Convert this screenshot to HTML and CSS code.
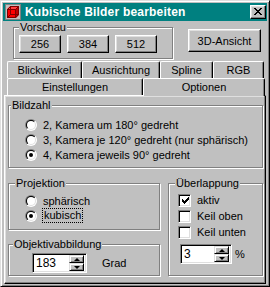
FILE: index.html
```html
<!DOCTYPE html>
<html>
<head>
<meta charset="utf-8">
<title>Kubische Bilder bearbeiten</title>
<link rel="stylesheet" href="styles.css">
</head>
<body>
<div class="window">
  <div class="titlebar">
    <svg class="appicon" width="16" height="16" viewBox="0 0 16 16">
      <rect x="0" y="0" width="16" height="16" fill="#808080"/>
      <rect x="1" y="1" width="14" height="14" fill="#c0c0c0"/>
      <rect x="2" y="5" width="9" height="9" fill="#ff0000"/>
      <polygon points="2,5 5,2 14,2 11,5" fill="#ff4040"/>
      <polygon points="11,5 14,2 14,11 11,14" fill="#c00000"/>
      <g fill="none" stroke="#800000" stroke-width="1">
        <rect x="2.5" y="5.5" width="8" height="8"/>
        <rect x="5.5" y="2.5" width="8" height="8"/>
        <path d="M2.5 5.5 L5.5 2.5 M10.5 5.5 L13.5 2.5 M10.5 13.5 L13.5 10.5 M2.5 13.5 L5.5 10.5"/>
      </g>
    </svg>
    <span class="title">Kubische Bilder bearbeiten</span>
    <span class="close">
      <svg width="8" height="7" viewBox="0 0 8 7">
        <path d="M0 0h2v1h1v1h2v-1h1v-1h2v1h-1v1h-1v1h-1v1h1v1h1v1h1v1h-2v-1h-1v-1h-2v1h-1v1h-2v-1h1v-1h1v-1h1v-1h-1v-1h-1v-1h-1z" fill="#000"/>
      </svg>
    </span>
  </div>

  <div class="top">
    <fieldset class="group vorschau">
      <legend class="lg-vorschau">Vorschau</legend>
      <div class="btnrow">
        <span class="btn small">256</span>
        <span class="btn small">384</span>
        <span class="btn small">512</span>
      </div>
    </fieldset>
    <span class="btn big">3D-Ansicht</span>
  </div>

  <div class="tabs">
    <div class="tabrow">
      <span class="tab t-blick">Blickwinkel</span>
      <span class="tab t-aus">Ausrichtung</span>
      <span class="tab t-spline">Spline</span>
      <span class="tab t-rgb">RGB</span>
    </div>
    <div class="tabrow">
      <span class="tab t-einst">Einstellungen</span>
      <span class="tab t-opt sel">Optionen</span>
    </div>
  </div>

  <div class="panel">
    <fieldset class="group bildzahl">
      <legend class="lg-bild">Bildzahl</legend>
      <div class="opts bild-opts">
        <div class="opt"><span class="radio"><span class="radio-in"><span class="radio-dot"></span></span></span><span>2, Kamera um 180° gedreht</span></div>
        <div class="opt"><span class="radio"><span class="radio-in"><span class="radio-dot"></span></span></span><span>3, Kamera je 120° gedreht (nur sphärisch)</span></div>
        <div class="opt"><span class="radio on"><span class="radio-in"><span class="radio-dot"></span></span></span><span>4, Kamera jeweils 90° gedreht</span></div>
      </div>
    </fieldset>

    <div class="lower">
      <div class="leftcol">
        <fieldset class="group projektion">
          <legend class="lg-proj">Projektion</legend>
          <div class="opts proj-opts">
            <div class="opt"><span class="radio"><span class="radio-in"><span class="radio-dot"></span></span></span><span>sphärisch</span></div>
            <div class="opt"><span class="radio on"><span class="radio-in"><span class="radio-dot"></span></span></span><span class="focus">kubisch</span></div>
          </div>
        </fieldset>
        <fieldset class="group objektiv">
          <legend class="lg-obj">Objektivabbildung</legend>
          <div class="objrow">
            <div class="spin spin-grad">
              <span class="spin-val">183</span>
              <span class="spin-btns">
                <span class="spin-btn"><span class="arrow up"></span></span>
                <span class="spin-btn"><span class="arrow down"></span></span>
              </span>
            </div>
            <span class="unit-grad">Grad</span>
          </div>
        </fieldset>
      </div>

      <fieldset class="group ueber">
        <legend class="lg-ueber">Überlappung</legend>
        <div class="checks">
          <div class="chk"><span class="check"><svg width="7" height="7" viewBox="0 0 7 7"><path d="M0 2h1v1h1v1h1v-1h1v-1h1v-1h1v-1h1v3h-1v1h-1v1h-1v1h-1v1h-1v-1h-1v-1h-1z" fill="#000"/></svg></span><span>aktiv</span></div>
          <div class="chk"><span class="check"></span><span>Keil oben</span></div>
          <div class="chk"><span class="check"></span><span>Keil unten</span></div>
        </div>
        <div class="pctrow">
          <div class="spin spin-pct">
            <span class="spin-val">3</span>
            <span class="spin-btns">
              <span class="spin-btn"><span class="arrow up"></span></span>
              <span class="spin-btn"><span class="arrow down"></span></span>
            </span>
          </div>
          <span class="unit-pct">%</span>
        </div>
      </fieldset>
    </div>
  </div>
</div>
</body>
</html>
```

FILE: styles.css
```css
* { box-sizing: border-box; }
html, body { margin: 0; padding: 0; }
body {
  background: #c0c0c0;
  font-family: "Liberation Sans", Arial, sans-serif;
  font-size: 11px;
  color: #000;
  width: 270px;
  height: 287px;
  overflow: hidden;
}
.window {
  width: 270px;
  height: 287px;
  border: 1px solid;
  border-color: #dfdfdf #000 #000 #dfdfdf;
  box-shadow: inset 1px 1px #fff, inset -1px -1px #808080;
  padding: 2px;
  display: flex;
  flex-direction: column;
  background: #c0c0c0;
}
.titlebar {
  height: 18px;
  flex: none;
  background: #008080;
  display: flex;
  align-items: center;
  padding: 0 1px 0 2px;
  color: #fff;
}
.appicon { flex: none; display: block; }
.title {
  margin-left: 4px;
  font-weight: bold;
  font-size: 12px;
  flex: 1;
  white-space: nowrap;
  letter-spacing: 0.2px;
}
.close {
  width: 16px;
  height: 14px;
  flex: none;
  background: #c0c0c0;
  border: 1px solid;
  border-color: #fff #000 #000 #fff;
  box-shadow: inset -1px -1px #808080, inset 1px 1px #dfdfdf;
  display: flex;
  align-items: center;
  justify-content: center;
  padding-bottom: 1px;
}
.close svg { display: block; }

/* groups */
fieldset.group {
  margin: 0;
  padding: 0;
  min-width: 0;
  border: 1px solid #808080;
  box-shadow: inset 1px 1px #fff, 1px 1px #fff;
}
fieldset.group legend {
  padding: 0 1px;
  line-height: 13px;
  height: 13px;
  background: #c0c0c0;
}

/* top area */
.top {
  height: 40px;
  flex: none;
  display: flex;
  align-items: flex-start;
  padding-left: 10px;
}
.vorschau { width: 160px; }
.lg-vorschau { margin-left: 5px; }
.btnrow {
  display: flex;
  gap: 6px;
  margin: 1px 0 5px 5px;
}
.btn {
  display: flex;
  align-items: center;
  justify-content: center;
  background: #c0c0c0;
  border: 1px solid;
  border-color: #fff #000 #000 #fff;
  box-shadow: inset -1px -1px #808080, inset 1px 1px #dfdfdf;
  color: #000;
  font-size: 11px;
}
.btn.small { width: 42px; height: 18px; }
.btn.big { width: 73px; height: 23px; margin: 8px 0 0 15px; }

/* tabs */
.tabs {
  flex: none;
  padding-left: 4px;
  display: flex;
  flex-direction: column;
}
.tabrow { display: flex; height: 17px; }
.tab {
  height: 17px;
  display: flex;
  align-items: center;
  justify-content: center;
  border-top: 1px solid #fff;
  border-left: 1px solid #fff;
  border-right: 1px solid #000;
  border-radius: 2px 2px 0 0;
  box-shadow: inset -1px 0 #808080;
  background: #c0c0c0;
  padding-bottom: 1px;
}
.t-blick { width: 75px; }
.t-aus { width: 78px; }
.t-spline { width: 53px; }
.t-rgb { width: 51px; }
.t-einst { width: 136px; }
.t-opt { width: 122px; }
.tab.sel {
  height: 18px;
  margin-bottom: -1px;
  position: relative;
  z-index: 1;
  padding-bottom: 2px;
}

/* panel */
.panel {
  flex: 1;
  margin: 0 1px 0 1px;
  border: 1px solid;
  border-color: #fff #000 #000 #fff;
  box-shadow: inset -1px -1px #808080, inset 1px 1px #dfdfdf;
  padding: 3px 0 0 3px;
}
.bildzahl { width: 255px; }
.lg-bild { margin-left: 2px; }
.opts { display: flex; flex-direction: column; }
.bild-opts { margin: 5px 0 5px 16px; }
.opt {
  display: flex;
  align-items: center;
  gap: 6px;
  height: 15px;
  white-space: nowrap;
}
.radio {
  width: 12px;
  height: 12px;
  flex: none;
  border-radius: 50%;
  background: linear-gradient(135deg, #808080 50%, #fff 50%);
  padding: 1px;
}
.radio-in {
  display: block;
  width: 10px;
  height: 10px;
  border-radius: 50%;
  background: linear-gradient(135deg, #000 50%, #dfdfdf 50%);
  padding: 1px;
}
.radio-dot {
  display: flex;
  align-items: center;
  justify-content: center;
  width: 8px;
  height: 8px;
  border-radius: 50%;
  background: #fff;
}
.radio.on .radio-dot::after {
  content: "";
  width: 4px;
  height: 4px;
  border-radius: 50%;
  background: #000;
}
.focus {
  outline: 1px dotted #000;
  outline-offset: 0;
  line-height: 13px;
  padding: 0 1px;
}

.lower {
  display: flex;
  gap: 8px;
  margin-top: 9px;
}
.leftcol { display: flex; flex-direction: column; gap: 8px; width: 152px; }
.projektion { width: 152px; }
.lg-proj { margin-left: 6px; }
.proj-opts { margin: 3px 0 6px 16px; }
.objektiv { width: 152px; }
.lg-obj { margin-left: 4px; }
.objrow {
  display: flex;
  align-items: center;
  margin: 2px 0 2px 23px;
}
.unit-grad { margin-left: 15px; }

.spin {
  display: flex;
  height: 20px;
  border: 1px solid;
  border-color: #808080 #fff #fff #808080;
  box-shadow: inset 1px 1px #000, inset -1px -1px #dfdfdf;
  background: #fff;
  padding: 2px 2px 2px 2px;
}
.spin-grad { width: 55px; }
.spin-pct { width: 52px; }
.spin-val { flex: 1; line-height: 15px; padding-left: 1px; font-size: 12px; }
.spin-btns {
  display: flex;
  flex-direction: column;
  width: 15px;
  margin: -1px 0 -1px 0;
}
.spin-btn {
  flex: 1;
  background: #c0c0c0;
  border: 1px solid;
  border-color: #dfdfdf #000 #000 #dfdfdf;
  box-shadow: inset 1px 1px #fff, inset -1px -1px #808080;
  display: flex;
  align-items: center;
  justify-content: center;
}
.arrow { width: 0; height: 0; border-left: 3px solid transparent; border-right: 3px solid transparent; }
.arrow.up { border-bottom: 3px solid #000; }
.arrow.down { border-top: 3px solid #000; }

.ueber { width: 95px; }
.lg-ueber { margin-left: 6px; }
.checks {
  display: flex;
  flex-direction: column;
  margin: 2px 0 0 9px;
}
.chk {
  display: flex;
  align-items: center;
  gap: 6px;
  height: 16px;
  white-space: nowrap;
}
.check {
  width: 13px;
  height: 13px;
  flex: none;
  background: #fff;
  border: 1px solid;
  border-color: #808080 #fff #fff #808080;
  box-shadow: inset 1px 1px #000, inset -1px -1px #dfdfdf;
  display: flex;
  align-items: center;
  justify-content: center;
  padding: 1px 0 0 1px;
}
.check svg { display: block; }
.pctrow {
  display: flex;
  align-items: center;
  margin: 4px 0 11px 11px;
}
.unit-pct { margin-left: 3px; }
```
